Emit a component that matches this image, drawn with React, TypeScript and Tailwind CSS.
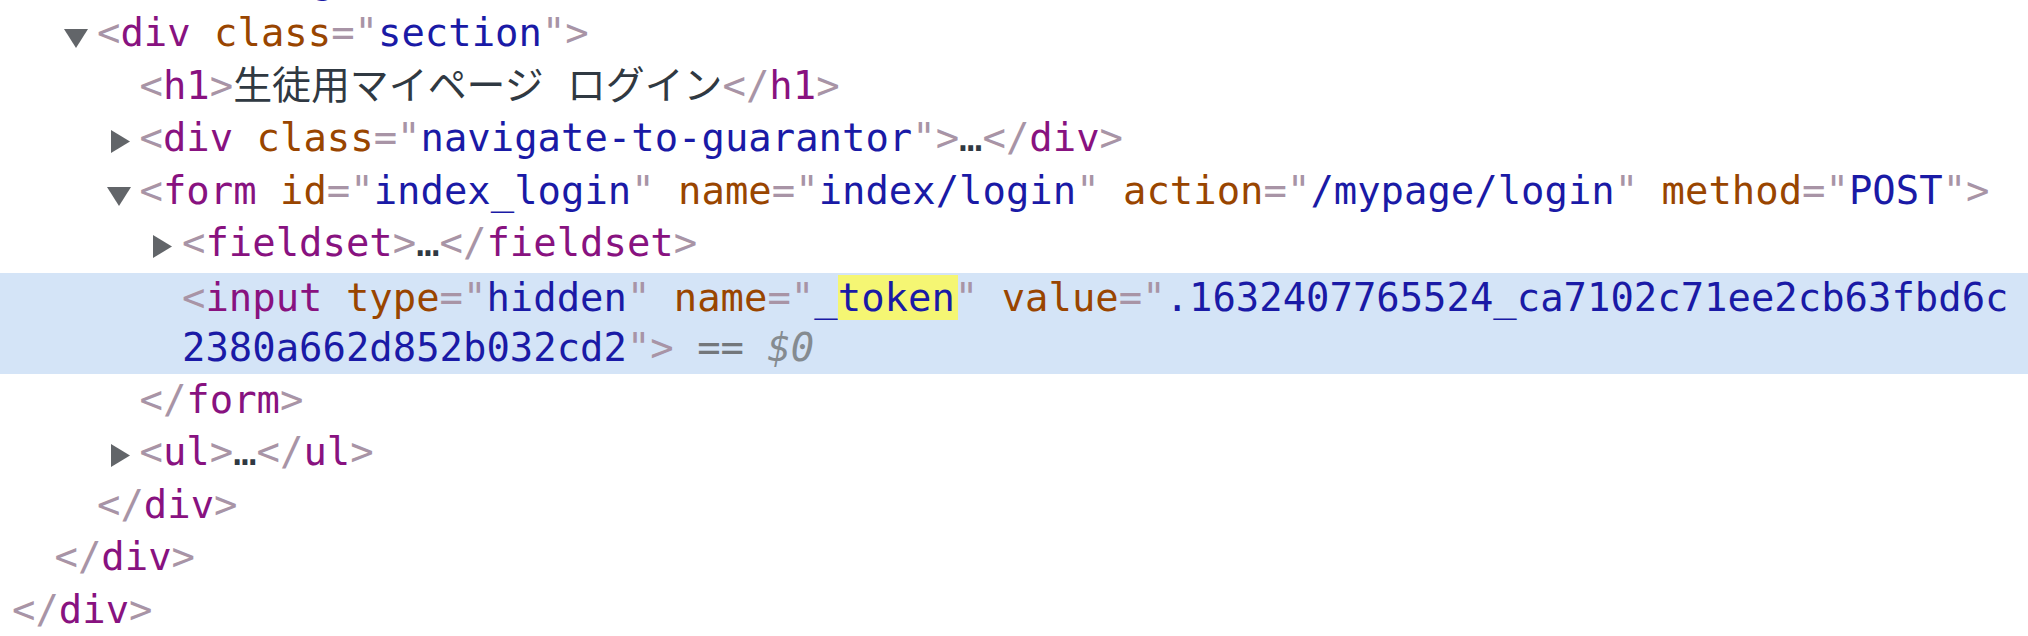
import React from 'react';

// devtools elements panel, light theme
const pad: Record<number, string> = {
    0: 'pl-[12px]',
    1: 'pl-[54.5px]',
    2: 'pl-[97px]',
    3: 'pl-[139.5px]',
    4: 'pl-[182px]',
};

const B = ({ children }: any) => <span className="text-[#a894a6]">{children}</span>;
const T = ({ children }: any) => <span className="text-[#881280]">{children}</span>;
const A = ({ children }: any) => <span className="text-[#994500]">{children}</span>;
const V = ({ children }: any) => <span className="text-[#1a1aa6]">{children}</span>;

const Open = () => (
    <svg className="-ml-[33px] mr-[9px] mt-[22px] shrink-0" width="24" height="19" viewBox="0 0 24 19">
        <polygon points="0,0 24,0 12,19" fill="#626569" />
    </svg>
);

const Closed = () => (
    <svg className="-ml-[29px] mr-[10px] mt-[18px] shrink-0" width="19" height="23" viewBox="0 0 19 23">
        <polygon points="0,0 19,11.5 0,23" fill="#626569" />
    </svg>
);

const Row = ({ level, toggle, h = 'h-[52.5px] leading-[52.5px]', children }: any) => (
    <div className={`flex items-start whitespace-pre ${h} ${pad[level]}`}>
        {toggle === 'open' && <Open />}
        {toggle === 'closed' && <Closed />}
        <span>{children}</span>
    </div>
);

const Attr = ({ name, value }: any) => (
    <>
        {' '}
        <A>{name}</A>
        <B>="</B>
        <V>{value}</V>
        <B>"</B>
    </>
);

const Dots = () => <span className="text-[#303942]">…</span>;

const App = () => {
    return (
        <div className="w-[2028px] h-[636px] overflow-hidden bg-white font-[family-name:'DejaVu_Sans_Mono','Noto_Sans_CJK_JP',monospace] text-[38.9px]">
            <div className="h-[7px] overflow-hidden">
                <div className="-mt-[46px]">
                    <Row level={1}>
                        <B>&lt;</B><T>div</T><Attr name="id" value="login" /><B>&gt;</B>
                    </Row>
                </div>
            </div>

            <Row level={2} toggle="open">
                <B>&lt;</B><T>div</T><Attr name="class" value="section" /><B>&gt;</B>
            </Row>
            <Row level={3}>
                <B>&lt;</B><T>h1</T><B>&gt;</B>
                <span className="text-[#303942]">生徒用マイページ ログイン</span>
                <B>&lt;/</B><T>h1</T><B>&gt;</B>
            </Row>
            <Row level={3} toggle="closed">
                <B>&lt;</B><T>div</T><Attr name="class" value="navigate-to-guarantor" /><B>&gt;</B>
                <Dots />
                <B>&lt;/</B><T>div</T><B>&gt;</B>
            </Row>
            <Row level={3} toggle="open">
                <B>&lt;</B><T>form</T>
                <Attr name="id" value="index_login" />
                <Attr name="name" value="index/login" />
                <Attr name="action" value="/mypage/login" />
                <Attr name="method" value="POST" />
                <B>&gt;</B>
            </Row>
            <Row level={4} toggle="closed">
                <B>&lt;</B><T>fieldset</T><B>&gt;</B>
                <Dots />
                <B>&lt;/</B><T>fieldset</T><B>&gt;</B>
            </Row>

            <div className="pt-[3px]">
                <div className="bg-[#d4e4f7]">
                    <Row level={4} h="h-[50.5px] leading-[50.5px]">
                        <B>&lt;</B><T>input</T>
                        <Attr name="type" value="hidden" />
                        {' '}
                        <A>name</A>
                        <B>="</B>
                        <V>_</V>
                        <span className="bg-[#f5f673] pr-[3px] -mr-[3px]">
                            <V>token</V>
                        </span>
                        <B>"</B>
                        {' '}
                        <A>value</A>
                        <B>="</B>
                        <V>.1632407765524_ca7102c71ee2cb63fbd6c</V>
                    </Row>
                    <Row level={4} h="h-[50.5px] leading-[50.5px]">
                        <V>2380a662d852b032cd2</V>
                        <B>"&gt;</B>
                        <span className="text-[#73777b]"> == </span>
                        <span className="text-[#858b90] italic">$0</span>
                    </Row>
                </div>
            </div>

            <Row level={3}>
                <B>&lt;/</B><T>form</T><B>&gt;</B>
            </Row>
            <Row level={3} toggle="closed">
                <B>&lt;</B><T>ul</T><B>&gt;</B>
                <Dots />
                <B>&lt;/</B><T>ul</T><B>&gt;</B>
            </Row>
            <Row level={2}>
                <B>&lt;/</B><T>div</T><B>&gt;</B>
            </Row>
            <Row level={1}>
                <B>&lt;/</B><T>div</T><B>&gt;</B>
            </Row>
            <Row level={0}>
                <B>&lt;/</B><T>div</T><B>&gt;</B>
            </Row>
        </div>
    );
};

export default App;
